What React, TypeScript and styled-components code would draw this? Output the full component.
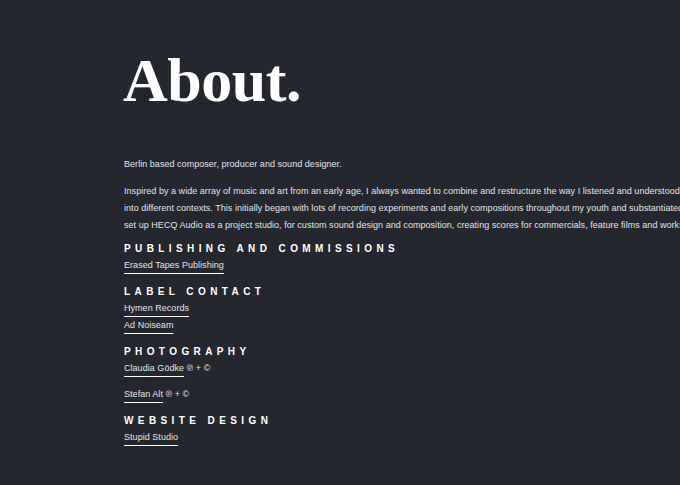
import styled, { createGlobalStyle } from 'styled-components';

const GlobalStyle = createGlobalStyle`
  html, body {
    margin: 0;
    background-color: #24282e;
    overflow: hidden;
  }
`;

const Page = styled.main`
  padding: 49px 0 0 124px;
  font-family: 'Liberation Sans', Arial, sans-serif;
  font-size: 9px;
  line-height: 17px;
  letter-spacing: 0.04px;
  color: #e2e3e4;
`;

const Title = styled.h1`
  margin: 0 0 45px -1px;
  font-family: 'Liberation Serif', 'Times New Roman', serif;
  font-size: 62px;
  font-weight: bold;
  line-height: 1;
  color: #fff;
  letter-spacing: -0.5px;
`;

const Paragraph = styled.p<{ $gap: number }>`
  margin: 0 0 ${(p) => p.$gap}px;
  white-space: nowrap;
`;

const Section = styled.section`
  margin-bottom: 9px;
`;

const Heading = styled.h2`
  margin: 0;
  font-size: 10px;
  font-weight: bold;
  line-height: 17px;
  letter-spacing: 4.4px;
  text-transform: uppercase;
  color: #fff;
`;

const Row = styled.div<{ $spaced?: boolean }>`
  margin-top: ${(p) => (p.$spaced ? '9px' : '0')};
`;

const Link = styled.a`
  color: #e2e3e4;
  text-decoration: underline;
  text-decoration-color: #fff;
  text-decoration-thickness: 1px;
  text-underline-offset: 5px;
`;

const credits = [
  {
    title: 'Publishing and Commissions',
    rows: [{ name: 'Erased Tapes Publishing' }],
  },
  {
    title: 'Label Contact',
    rows: [{ name: 'Hymen Records' }, { name: 'Ad Noiseam' }],
  },
  {
    title: 'Photography',
    rows: [
      { name: 'Claudia Gödke', note: ' ℗ + ©' },
      { name: 'Stefan Alt', note: ' ℗ + ©', spaced: true },
    ],
  },
  {
    title: 'Website Design',
    rows: [{ name: 'Stupid Studio' }],
  },
];

const App = () => {
  return (
    <>
      <GlobalStyle />
      <Page>
        <Title>About.</Title>
        <Paragraph $gap={10}>Berlin based composer, producer and sound designer.</Paragraph>
        <Paragraph $gap={6}>
          Inspired by a wide array of music and art from an early age, I always wanted to combine and restructure the way I listened and understood music, and to put it
          <br />
          into different contexts. This initially began with lots of recording experiments and early compositions throughout my youth and substantiated itself when I
          <br />
          set up HECQ Audio as a project studio, for custom sound design and composition, creating scores for commercials, feature films and works for the stage.
        </Paragraph>
        {credits.map((section) => (
          <Section key={section.title}>
            <Heading>{section.title}</Heading>
            {section.rows.map((row) => (
              <Row key={row.name} $spaced={row.spaced}>
                <Link href="#">{row.name}</Link>
                {row.note}
              </Row>
            ))}
          </Section>
        ))}
      </Page>
    </>
  );
};

export default App;
